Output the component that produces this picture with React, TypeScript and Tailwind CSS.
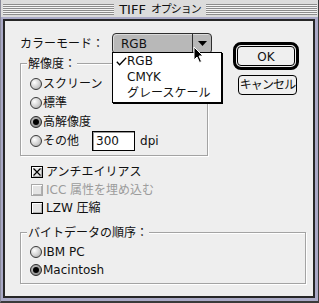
import React from 'react';

function Radio({ label, checked, h = 'h-[19px]' }: { label: string; checked?: boolean; h?: string }) {
  return (
    <div className={`flex ${h} items-center gap-[1px]`}>
      {checked ? (
        <span className="flex h-[12px] w-[12px] items-center justify-center rounded-full border border-[#2a2a2a] bg-[radial-gradient(circle_at_35%_35%,#c4c4c4,#7a7a7a)]">
          <span className="h-[6px] w-[6px] rounded-full bg-black" />
        </span>
      ) : (
        <span className="h-[12px] w-[12px] rounded-full border border-[#3a3a3a] bg-[radial-gradient(circle_at_35%_35%,#ffffff,#d0d0d0_55%,#9a9a9a)]" />
      )}
      <span>{label}</span>
    </div>
  );
}

function Check({ label, checked, disabled }: { label: string; checked?: boolean; disabled?: boolean }) {
  const border = disabled ? 'border-[#a8a8a8]' : 'border-black';
  return (
    <div className={`flex h-[18px] items-center gap-[3px] ${disabled ? 'text-[#9c9c9c]' : ''}`}>
      <span
        className={`relative h-[12px] w-[12px] border ${border} bg-[#e4e4e4] shadow-[inset_1px_1px_0_#ffffff,inset_-1px_-1px_0_#b0b0b0]`}
      >
        {checked && (
          <svg width="10" height="10" viewBox="0 0 10 10" className="absolute left-0 top-0">
            <path d="M1.5 1.5 L8.5 8.5 M8.5 1.5 L1.5 8.5" stroke="#000" strokeWidth="1.2" />
          </svg>
        )}
      </span>
      <span>{label}</span>
    </div>
  );
}

function GroupLabel({ text }: { text: string }) {
  return (
    <span className="absolute left-[6px] top-[-8px] h-[16px] bg-[#eeeeee] px-[1px] leading-[16px]">{text}</span>
  );
}

export default function App() {
  return (
    <div className="flex h-[303px] w-[319px] flex-col border-b-2 border-l border-r border-b-[#3a3a3a] border-l-[#8a8a9a] border-r-[#3a3a3a] bg-[#a9a9c6] font-['DejaVu_Sans','Noto_Sans_CJK_JP',sans-serif] text-[12px] leading-none text-[#111]">
      {/* title bar */}
      <div className="flex h-[17px] bg-[#dcdcdc] pl-[2px] pr-[1px]">
        <div className="mt-[4px] h-[11px] flex-1 bg-[repeating-linear-gradient(to_bottom,#8c8c8c_0px,#8c8c8c_1px,#f4f4f4_1px,#f4f4f4_2px)]" />
        <span className="flex items-center whitespace-nowrap px-[5px] pt-[1px]">
          <span className="text-[13px]">TIFF</span>
          <span className="ml-[5px] text-[11px] tracking-[-1px]">オプション</span>
        </span>
        <div className="mt-[4px] h-[11px] flex-1 bg-[repeating-linear-gradient(to_bottom,#8c8c8c_0px,#8c8c8c_1px,#f4f4f4_1px,#f4f4f4_2px)]" />
      </div>

      {/* body */}
      <div className="relative mb-[3px] ml-[2px] mr-[3px] mt-[2px] flex flex-1 flex-col border-2 border-[#262626] bg-[#eeeeee]">
        <div className="flex">
          <div className="w-[228px] pl-[15px] pt-[12px]">
            <div className="flex h-[21px] items-center">
              <span className="w-[92px]">カラーモード：</span>
              <div className="flex h-[21px] w-[100px] rounded-[4px] border border-[#2e2e2e] bg-[#b8b8b8] shadow-[inset_1px_1px_0_#dadada]">
                <div className="flex flex-1 items-center pl-[8px]">RGB</div>
                <div className="flex w-[19px] items-center justify-center border-l border-[#2e2e2e] pb-[1px]">
                  <svg width="9" height="5" viewBox="0 0 9 5">
                    <polygon points="0,0 9,0 4.5,5" fill="#000" />
                  </svg>
                </div>
              </div>
            </div>

            <div className="relative mt-[9px] h-[93px] w-[188px] border border-[#a3a3a3] pl-[9px] pt-[10px] shadow-[1px_1px_0_#ffffff,inset_1px_1px_0_#ffffff]">
              <GroupLabel text="解像度：" />
              <Radio label="スクリーン" />
              <Radio label="標準" />
              <Radio label="高解像度" checked />
              <div className="flex h-[19px] items-center">
                <Radio label="その他" />
                <div className="ml-[13px] flex h-[20px] w-[43px] items-center border border-black bg-white pl-[3px] shadow-[inset_1px_1px_0_#9a9a9a]">
                  300
                </div>
                <span className="ml-[5px]">dpi</span>
              </div>
            </div>
          </div>

          <div className="flex flex-col pt-[21px]">
            <div className="h-[28px] w-[66px] rounded-[8px] border-[3px] border-black p-[1px]">
              <div className="flex h-full items-center justify-center rounded-[4px] border border-black bg-[#efefef] pt-[1px]">
                OK
              </div>
            </div>
            <div className="ml-[5px] mt-[5px] flex h-[20px] w-[59px] items-center justify-center whitespace-nowrap rounded-[4px] border border-black bg-[#efefef] tracking-[-0.9px]">
              キャンセル
            </div>
          </div>
        </div>

        <div className="mt-[7px] pl-[26px]">
          <Check label="アンチエイリアス" checked />
          <Check label="ICC 属性を埋め込む" disabled />
          <Check label="LZW 圧縮" />
        </div>

        <div className="relative ml-[15px] mt-[15px] h-[52px] w-[286px] border border-[#a3a3a3] pl-[9px] pt-[10px] shadow-[1px_1px_0_#ffffff,inset_1px_1px_0_#ffffff]">
          <GroupLabel text="バイトデータの順序：" />
          <Radio label="IBM PC" h="h-[18px]" />
          <Radio label="Macintosh" h="h-[18px]" checked />
        </div>

        {/* open popup menu */}
        <div className="absolute left-[107px] top-[31px] h-[51px] w-[110px] border border-black bg-white shadow-[1px_1px_0_#000]">
          <div className="flex h-[16px] items-center">
            <span className="flex w-[14px] justify-center pl-[2px]">
              <svg width="11" height="9" viewBox="0 0 11 9">
                <path d="M0.8 4.8 L3.6 7.8 L10.2 0.8" stroke="#000" strokeWidth="1.3" fill="none" />
              </svg>
            </span>
            <span>RGB</span>
          </div>
          <div className="flex h-[16px] items-center pl-[14px]">CMYK</div>
          <div className="flex h-[16px] items-center pl-[14px]">グレースケール</div>
        </div>

        {/* mouse pointer */}
        <svg width="12" height="18" viewBox="0 0 12 18" className="absolute left-[188px] top-[25px]">
          <path d="M1 1 L1 14 L4 11 L6.5 16.5 L8.5 15.5 L6 10 L10 10 Z" fill="#000" stroke="#fff" strokeWidth="1" />
        </svg>
      </div>
    </div>
  );
}
